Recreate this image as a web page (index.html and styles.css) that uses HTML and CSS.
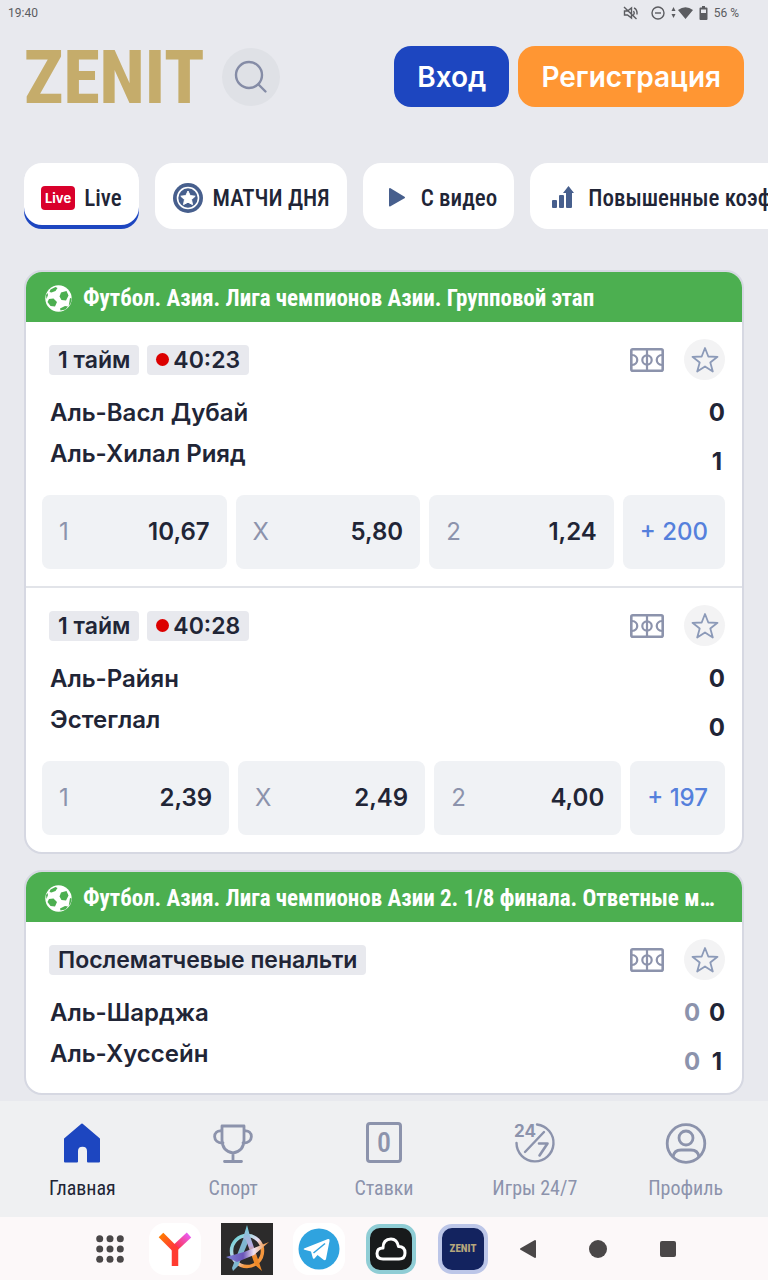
FILE: index.html
```html
<!DOCTYPE html>
<html lang="ru">
<head>
    <meta charset="UTF-8">
    <meta name="viewport" content="width=device-width, initial-scale=1.0">
    <title>ZENIT</title>
    <link rel="stylesheet" href="styles.css">
</head>
<body>
    <!-- Общие иконки -->
    <svg class="sprite" aria-hidden="true">
        <symbol id="ball" viewBox="0 0 27 27">
            <circle cx="13.5" cy="13.5" r="13.2" fill="#fff"/>
            <path fill="#4caf50" d="M16 7.500l5.500-1.500 2 4.500-2.500 5-4.500-.5-2-3.500zM5.500 4.500l5-2.500 2 1-2 3-4 1.500-2-.5zM4 14l4.500-.5 3.500 3.500-2 4.500-4.500-.5-3-4zM15 23.500l5-2.500 3 .5-2.500 3-5 1zM25 13l1.700.5-1 4.500-2 3zM1 10l1.500-2 .5 2-1.500 4z"/>
        </symbol>
        <symbol id="field" viewBox="0 0 34 24">
            <g fill="none" stroke="#8c93ac" stroke-width="2.200">
                <rect x="1.300" y="1.300" width="31.400" height="21.400" rx="1.500" stroke-width="2.600"/>
                <path d="M17 1v22"/>
                <circle cx="17" cy="12" r="4.700"/>
                <path d="M2 7c7 .5 7 9.500 0 10M32 7c-7 .5-7 9.500 0 10"/>
            </g>
        </symbol>
        <symbol id="star" viewBox="0 0 28 28">
            <path fill="none" stroke="#8c9ab8" stroke-width="1.800" stroke-linejoin="round" d="M14 2l3.300 8.500 9.200.3-7.200 5.700 2.500 9L14 20.500l-7.800 5 2.500-9L1.500 10.800l9.200-.3z"/>
        </symbol>
    </svg>

    <div class="status">
        <span>19:40</span>
        <div class="status-icons">
            <svg class="mute" width="16" height="16" viewBox="0 0 16 16" fill="none" stroke="#5b5c60" stroke-width="1.400">
                <path d="M1.500 6h3l4-3v10l-4-3h-3zM1 2l12.500 12M10.500 6q1.500 2 0 4M11 3q3.500 1.500 3 6.500"/>
            </svg>
            <svg width="14" height="14" viewBox="0 0 14 14" fill="none" stroke="#5b5c60" stroke-width="1.400">
                <circle cx="7" cy="7" r="6"/><path d="M4 7h6"/>
            </svg>
            <svg class="wifi" width="22" height="14" viewBox="0 0 22 14" fill="#5b5c60">
                <path d="M.5 5l2-4 2 4zM.5 8h4l-2 4zM7 4q7.500-5.500 15 0l-7.500 9z"/>
            </svg>
            <svg width="9" height="14" viewBox="0 0 9 14" fill="#5b5c60">
                <path fill-rule="evenodd" d="M3 0h3v1.500h1.500q1 0 1 1V13q0 1-1 1h-6q-1 0-1-1V2.500q0-1 1-1H3zM2 3.500V7h5V3.500z"/>
            </svg>
            <span>56 %</span>
        </div>
    </div>

    <main>
        <header>
            <a href="#" class="logo">ZENIT</a>
            <button type="button" class="search" aria-label="Поиск">
                <svg width="34" height="34" viewBox="0 0 34 34" fill="none" stroke="#858ca6" stroke-width="2.400" stroke-linecap="round">
                    <circle cx="15" cy="15" r="13"/><path d="M24.500 24.500l7 7"/>
                </svg>
            </button>
            <div class="auth">
                <button type="button" class="btn btn-login">Вход</button>
                <button type="button" class="btn btn-register">Регистрация</button>
            </div>
        </header>

        <nav class="chips">
            <a href="#" class="chip active"><span class="live-badge">Live</span>Live</a>
            <a href="#" class="chip">
                <svg width="32" height="32" viewBox="0 0 32 32">
                    <circle cx="16" cy="16" r="15" fill="#475f8d"/>
                    <circle cx="16" cy="16" r="10.500" fill="none" stroke="#fff" stroke-width="1.600"/>
                    <path fill="#fff" stroke="#fff" stroke-linejoin="round" d="M16 9l2.200 4.600 5 .6-3.700 3.400 1 5L16 20.200l-4.500 2.400 1-5-3.700-3.400 5-.6z"/>
                </svg>МАТЧИ ДНЯ</a>
            <a href="#" class="chip">
                <svg width="32" height="32" viewBox="0 0 32 32"><path fill="#475f8d" stroke="#475f8d" stroke-width="2" stroke-linejoin="round" d="M10 7l14 8.500-14 8z"/></svg>С видео</a>
            <a href="#" class="chip">
                <svg width="32" height="32" viewBox="0 0 32 32" fill="#475f8d">
                    <rect x="5" y="18" width="5" height="8" rx="1"/><rect x="12" y="13" width="5" height="13" rx="1"/>
                    <path d="M19 25V11h-3l5.500-7L27 11h-2v14q0 1-1 1h-4q-1 0-1-1z"/>
                </svg>Повышенные коэффициенты</a>
        </nav>

        <section class="league">
            <h2><svg width="27" height="27"><use href="#ball"/></svg><span>Футбол. Азия. Лига чемпионов Азии. Групповой этап</span></h2>
            <article class="match">
                <div class="match-top">
                    <span class="badge">1 тайм</span>
                    <span class="badge live">40:23</span>
                    <svg class="field" width="34" height="24"><use href="#field"/></svg>
                    <button type="button" class="fav" aria-label="В избранное"><svg width="28" height="28"><use href="#star"/></svg></button>
                </div>
                <div class="match-body">
                    <div class="teams"><div>Аль-Васл Дубай</div><div>Аль-Хилал Рияд</div></div>
                    <div class="scores"><div>0</div><div>1</div></div>
                </div>
                <div class="odds">
                    <button type="button" class="odd"><span>1</span><b>10,67</b></button>
                    <button type="button" class="odd"><span>X</span><b>5,80</b></button>
                    <button type="button" class="odd"><span>2</span><b>1,24</b></button>
                    <a href="#" class="more">+ 200</a>
                </div>
            </article>
            <article class="match">
                <div class="match-top">
                    <span class="badge">1 тайм</span>
                    <span class="badge live">40:28</span>
                    <svg class="field" width="34" height="24"><use href="#field"/></svg>
                    <button type="button" class="fav" aria-label="В избранное"><svg width="28" height="28"><use href="#star"/></svg></button>
                </div>
                <div class="match-body">
                    <div class="teams"><div>Аль-Райян</div><div>Эстеглал</div></div>
                    <div class="scores"><div>0</div><div>0</div></div>
                </div>
                <div class="odds">
                    <button type="button" class="odd"><span>1</span><b>2,39</b></button>
                    <button type="button" class="odd"><span>X</span><b>2,49</b></button>
                    <button type="button" class="odd"><span>2</span><b>4,00</b></button>
                    <a href="#" class="more">+ 197</a>
                </div>
            </article>
        </section>

        <section class="league">
            <h2><svg width="27" height="27"><use href="#ball"/></svg><span>Футбол. Азия. Лига чемпионов Азии 2. 1/8 финала. Ответные матчи</span></h2>
            <article class="match no-odds">
                <div class="match-top">
                    <span class="badge">Послематчевые пенальти</span>
                    <svg class="field" width="34" height="24"><use href="#field"/></svg>
                    <button type="button" class="fav" aria-label="В избранное"><svg width="28" height="28"><use href="#star"/></svg></button>
                </div>
                <div class="match-body">
                    <div class="teams"><div>Аль-Шарджа</div><div>Аль-Хуссейн</div></div>
                    <div class="scores two"><div><i>0</i><span>0</span></div><div><i>0</i><span>1</span></div></div>
                </div>
            </article>
        </section>
    </main>

    <nav class="tabs">
        <a href="#" class="active">
            <svg width="44" height="44" viewBox="0 0 44 44"><path fill="#1d46c0" stroke="#1d46c0" stroke-width="2" stroke-linejoin="round" d="M22 3.500l17 14.500v22.500H28V30c0-7-11-7-11 0v10.500H5V18z"/></svg>
            Главная
        </a>
        <a href="#">
            <svg width="44" height="44" viewBox="0 0 44 44" fill="none" stroke="#8c93ac" stroke-width="2.800" stroke-linecap="round" stroke-linejoin="round">
                <path d="M11 5h22v14q0 11-11 13-11-2-11-13zM22 32v8M13.500 40.500h17M11 10c-10-2-10 13 1 12M33 10c10-2 10 13-1 12"/>
            </svg>
            Спорт
        </a>
        <a href="#">
            <span class="coupon">0</span>
            Ставки
        </a>
        <a href="#">
            <svg width="44" height="44" viewBox="0 0 44 44" fill="none" stroke="#8c93ac" stroke-width="2.400" stroke-linecap="round">
                <path d="M24 3.500A18.500 18.500 0 1 1 3.500 22M12 31L31 11"/>
                <text class="t24" x="1" y="16">24</text>
                <path d="M26 22.500h8.500l-8 12" stroke-width="2.600" stroke-linejoin="round"/>
            </svg>
            Игры 24/7
        </a>
        <a href="#">
            <svg width="44" height="44" viewBox="0 0 44 44" fill="none" stroke="#8c93ac" stroke-width="2.800">
                <circle cx="22" cy="22.500" r="18.800"/><circle cx="22" cy="17" r="7"/>
                <path d="M9 36q1-7 8-7h10q7 0 8 7"/>
            </svg>
            Профиль
        </a>
    </nav>

    <div class="dock">
        <button type="button" class="sys" aria-label="Все приложения">
            <svg width="28" height="28" viewBox="0 0 28 28" fill="#4a4748">
                <circle cx="3.700" cy="3.700" r="3.500"/><circle cx="14" cy="3.700" r="3.500"/><circle cx="24.300" cy="3.700" r="3.500"/>
                <circle cx="3.700" cy="14" r="3.500"/><circle cx="14" cy="14" r="3.500"/><circle cx="24.300" cy="14" r="3.500"/>
                <circle cx="3.700" cy="24.300" r="3.500"/><circle cx="14" cy="24.300" r="3.500"/><circle cx="24.300" cy="24.300" r="3.500"/>
            </svg>
        </button>
        <div class="apps">
            <a href="#" class="app white" aria-label="Браузер">
                <svg width="34" height="34" viewBox="0 0 34 34" fill="none" stroke-width="6.500">
                    <defs>
                        <linearGradient id="yl" x1="0" y1="0" x2="1" y2="1"><stop offset="0" stop-color="#ff7a00"/><stop offset="1" stop-color="#ff3040"/></linearGradient>
                        <linearGradient id="yr" x1="1" y1="0" x2="0" y2="1"><stop offset="0" stop-color="#e95cf0"/><stop offset="1" stop-color="#ff3040"/></linearGradient>
                    </defs>
                    <path stroke="url(#yr)" d="M31 3L17 16"/>
                    <path stroke="url(#yl)" d="M3 3l14 14"/>
                    <path stroke="#ff3b30" d="M17 15v19"/>
                </svg>
            </a>
            <a href="#" class="app dark" aria-label="Арт">
                <svg width="50" height="50" viewBox="0 0 50 50" fill="none">
                    <defs>
                        <linearGradient id="ring" x1="0" y1="0" x2="1" y2="1"><stop offset=".1" stop-color="#75d2d8"/><stop offset=".5" stop-color="#e8ddf2"/><stop offset=".7" stop-color="#f5963c"/></linearGradient>
                        <linearGradient id="bar"><stop offset="0" stop-color="#7f83d8"/><stop offset=".4" stop-color="#6a55b8"/><stop offset=".65" stop-color="#efe3f2"/><stop offset="1" stop-color="#f08a28"/></linearGradient>
                        <linearGradient id="legs" x1="0" y1="0" x2="0" y2="1"><stop offset="0" stop-color="#6fd0d8"/><stop offset=".45" stop-color="#b9a9e0"/><stop offset=".7" stop-color="#f08a28"/></linearGradient>
                    </defs>
                    <circle cx="25" cy="27" r="15.500" stroke="url(#ring)" stroke-width="3.500"/>
                    <path fill="#7fb6d0" d="M22 13l5 3-11 26-5 5-1-3z"/>
                    <path fill="url(#legs)" d="M25 1l3 11 12 35-7-6-9-25-3-2z"/>
                    <path fill="url(#bar)" d="M4 33l18-5 25-10-15 13-17 7z"/>
                </svg>
            </a>
            <a href="#" class="app white" aria-label="Telegram">
                <svg width="42" height="42" viewBox="0 0 42 42">
                    <circle cx="21" cy="21" r="20.500" fill="#2fa3df"/>
                    <path fill="#fff" d="M6 20.500L30 11q2-.5 1.500 2L28 31q-.7 2-2.500.8L19.500 27l-3 3.500q-1.500 1-1.800-1L13 23.500l-6.500-1.800q-1.500-.5-.5-1.200z"/>
                    <path stroke="#2fa3df" stroke-width="1.500" d="M15.500 25L27 15.500"/>
                </svg>
            </a>
            <a href="#" class="app cloud" aria-label="Облако">
                <svg width="32" height="24" viewBox="0 0 32 24" fill="none" stroke="#fff" stroke-width="3" stroke-linejoin="round"><path d="M8 22q-6 0-6-5.500T8 11q0-9 8-9 6 0 7.500 7.500 6.500 0 6.500 6.500 0 6-6 6z"/></svg>
            </a>
            <a href="#" class="app zenit">ZENIT</a>
        </div>
        <div class="sys-nav">
            <button type="button" class="sys" aria-label="Назад"><svg width="18" height="20" viewBox="0 0 18 20"><path fill="#4a4748" stroke="#4a4748" stroke-width="2" stroke-linejoin="round" d="M2 10l14-8v16z"/></svg></button>
            <button type="button" class="sys" aria-label="Домой"><svg width="18" height="18" viewBox="0 0 18 18"><circle cx="9" cy="9" r="9" fill="#4a4748"/></svg></button>
            <button type="button" class="sys" aria-label="Недавние"><svg width="16" height="16" viewBox="0 0 16 16"><rect width="16" height="16" rx="2" fill="#4a4748"/></svg></button>
        </div>
    </div>
</body>
</html>
```
FILE: styles.css
```css
* {
    box-sizing: border-box;
}
body {
    margin: 0;
    height: 100vh;
    display: flex;
    flex-direction: column;
    overflow: hidden;
    background: #e8e9ee;
    color: #212536;
    font-family: Inter, "Noto Sans", sans-serif;
    font-size: 24px;
    font-weight: 500;
}
a {
    color: inherit;
    text-decoration: none;
}
button {
    border: none;
    padding: 0;
    margin: 0;
    font: inherit;
    color: inherit;
    cursor: pointer;
}
svg {
    flex: none;
}
.sprite {
    position: absolute;
    width: 0;
    height: 0;
}

/* status bar */
.status {
    flex: none;
    display: flex;
    justify-content: space-between;
    align-items: center;
    height: 26px;
    padding: 0 29px 0 8px;
    font: 12px/26px Roboto, sans-serif;
    color: #5b5c60;
}
.status-icons {
    display: flex;
    align-items: center;
    gap: 6px;
}
.mute {
    margin-right: 6px;
}

main {
    flex: 1;
    min-height: 0;
    overflow: hidden;
    padding: 0 24px;
}

/* header */
header {
    display: flex;
    align-items: center;
    height: 101px;
}
.logo {
    padding-top: 2px;
    color: #c5ac6b;
    font: 800 74px/62px "Roboto Condensed", Roboto, sans-serif;
}
.search {
    display: flex;
    align-items: center;
    justify-content: center;
    width: 58px;
    height: 58px;
    margin-left: 17px;
    border-radius: 50%;
    background: #dfe1e6;
}
.auth {
    display: flex;
    gap: 9px;
    margin-left: auto;
}
.btn {
    height: 61px;
    padding: 0 23px;
    border-radius: 17px;
    color: #fff;
    font-size: 28px;
    font-weight: 600;
}
.btn-login {
    background: #1d46c0;
}
.btn-register {
    background: #ff9633;
}

/* filter chips */
.chips {
    display: flex;
    gap: 16px;
    margin: 36px -24px 41px 0;
    overflow: hidden;
}
.chip {
    flex: none;
    display: flex;
    align-items: center;
    gap: 9px;
    height: 66px;
    padding: 4px 17px 0;
    border-radius: 18px;
    background: #fff;
    font-family: "Roboto Condensed", Roboto, sans-serif;
    font-size: 23px;
    white-space: nowrap;
}
.chip.active {
    box-shadow: inset 0 -4px #1d46c0;
}
.live-badge {
    padding: 0 4px;
    border-radius: 4px;
    background: #d9002b;
    color: #fff;
    font: 700 13px/24px Inter, sans-serif;
}

/* league card */
.league {
    margin-bottom: 16px;
    border: 2px solid #d6d8e2;
    border-radius: 18px;
    background: #fff;
    overflow: hidden;
}
.league h2 {
    display: flex;
    align-items: center;
    gap: 11px;
    height: 50px;
    margin: 0;
    padding: 2px 18px 0 19px;
    background: #4caf50;
    color: #fff;
    font: 700 23px/48px "Roboto Condensed", Roboto, sans-serif;
}
.league h2 span {
    padding-top: 2px;
    overflow: hidden;
    text-overflow: ellipsis;
    white-space: nowrap;
}
.match {
    padding: 17px 17px 17px 16px;
}
.match + .match {
    border-top: 2px solid #e2e4e9;
}
.match.no-odds {
    padding-bottom: 7px;
}
.match-top {
    display: flex;
    align-items: center;
    gap: 8px;
    padding-left: 7px;
}
.badge {
    display: flex;
    align-items: center;
    padding: 0 9px;
    border-radius: 4px;
    background: #e8e9ee;
    font-size: 23px;
    font-weight: 600;
    line-height: 30px;
}
.badge.live::before {
    content: "";
    width: 13px;
    height: 13px;
    margin-right: 4px;
    border-radius: 50%;
    background: #dc0000;
}
.field {
    margin: 0 12px 0 auto;
}
.fav {
    display: flex;
    align-items: center;
    justify-content: center;
    width: 41px;
    height: 41px;
    border-radius: 50%;
    background: #f3f3f4;
}
.match-body {
    display: flex;
    justify-content: space-between;
    margin: 8px 0 0 8px;
}
.teams {
    padding-top: 4px;
    font-weight: 600;
    line-height: 41px;
}
.scores {
    line-height: 49px;
    font-weight: 700;
    text-align: center;
}
.scores.two div {
    display: grid;
    grid-template-columns: 16px 16px;
    gap: 9px;
}
.scores i {
    color: #8c93ac;
    font-style: normal;
}
.odds {
    display: flex;
    gap: 9px;
    margin-top: 9px;
}
.odd,
.more {
    height: 74px;
    padding: 0 17px;
    border-radius: 8px;
    background: #f0f2f5;
    line-height: 74px;
}
.odd {
    flex: 1;
    display: flex;
    justify-content: space-between;
}
.odd span {
    color: #8c93ac;
    font-weight: 400;
}
.odd b {
    font-weight: 600;
}
.more {
    color: #5580dc;
}

/* bottom tabs */
.tabs {
    flex: none;
    display: flex;
    height: 116px;
    padding: 20px 7px 0;
    background: #eff0f2;
    color: #8c93ac;
    font: 20px/28px "Roboto Condensed", Roboto, sans-serif;
}
.tabs a {
    flex: 1;
    display: flex;
    flex-direction: column;
    align-items: center;
    gap: 9px;
}
.tabs .active {
    color: #212536;
}
.coupon {
    width: 36px;
    height: 41px;
    margin: 1px 0 2px;
    border: 3px solid #8c93ac;
    border-radius: 4px;
    font-size: 28px;
    font-weight: 500;
    line-height: 35px;
    text-align: center;
}
.t24 {
    fill: #8c93ac;
    stroke: none;
    font: 700 17px Inter, sans-serif;
}

/* system dock */
.dock {
    flex: none;
    display: flex;
    justify-content: center;
    align-items: center;
    gap: 9px;
    height: 63px;
    padding-left: 10px;
    background: #fcf8f9;
}
.sys {
    display: flex;
    align-items: center;
    justify-content: center;
    width: 60px;
    height: 60px;
    background: none;
}
.apps,
.sys-nav {
    display: flex;
    align-items: center;
}
.apps {
    gap: 20px;
}
.sys-nav {
    gap: 10px;
}
.app {
    display: flex;
    align-items: center;
    justify-content: center;
    width: 52px;
    height: 52px;
}
.white {
    border-radius: 16px;
    background: #fff;
}
.dark {
    background: #2c2b2b;
}
.cloud,
.zenit {
    width: 50px;
    height: 50px;
    margin: 0 1px;
    border-radius: 14px;
}
.cloud {
    border: 4px solid #8fcdd5;
    background: #181a1b;
}
.zenit {
    border: 4px solid #bcc6e8;
    background: #13235f;
    color: #b5a67c;
    font: 800 11px/12px "Roboto Condensed", Roboto, sans-serif;
}
```
